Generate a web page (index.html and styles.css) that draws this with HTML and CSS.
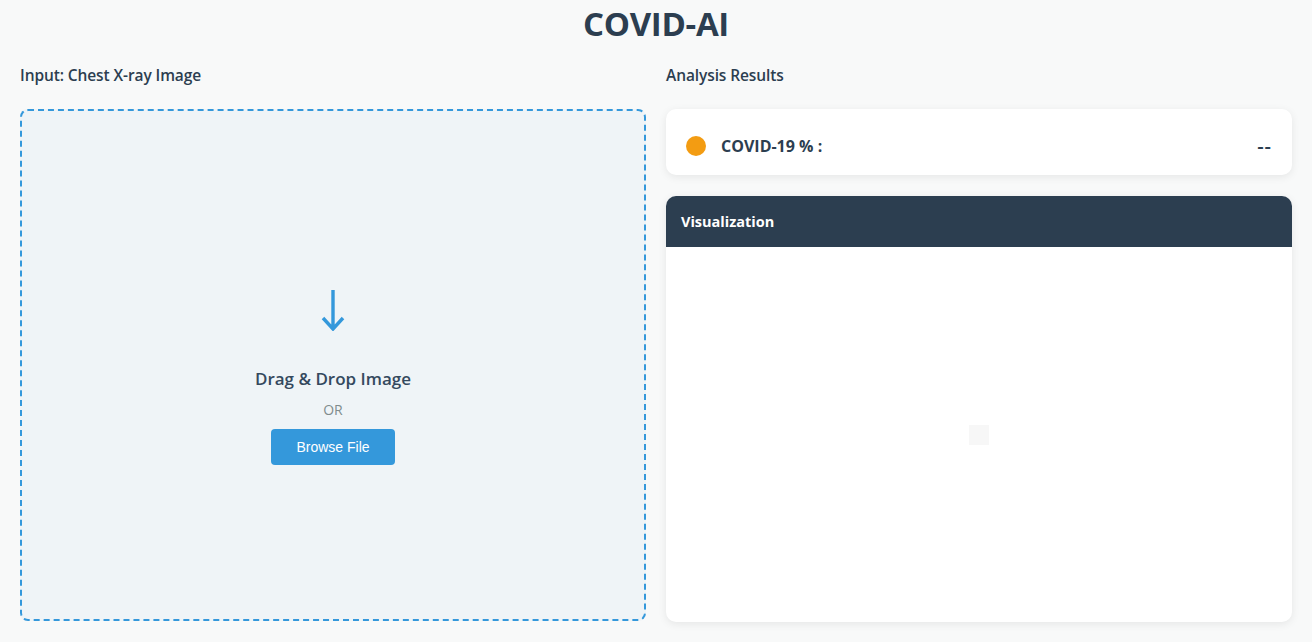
FILE: index.html
```html
<!DOCTYPE html>
<html>
<head>
<meta charset="utf-8">
<link rel="stylesheet" href="styles.css">
</head>
<body>
<h1 class="title">COVID-AI</h1>
<div class="main">
  <section class="col">
    <h3 class="label">Input: Chest X-ray Image</h3>
    <div class="dropzone">
      <svg class="arrow" width="24" height="42" viewBox="0 0 24 42">
        <path d="M12 1 V40 M2 29 L12 40 L22 29" fill="none" stroke="#3498db" stroke-width="3.4"/>
      </svg>
      <div class="drop-text">Drag &amp; Drop Image</div>
      <div class="or">OR</div>
      <button class="browse">Browse File</button>
    </div>
  </section>
  <section class="col">
    <h3 class="label">Analysis Results</h3>
    <div class="result-card">
      <span class="dot"></span>
      <span class="result-name">COVID-19 % :</span>
      <span class="result-value">--</span>
    </div>
    <div class="viz-card">
      <div class="viz-header">Visualization</div>
      <div class="viz-body"><div class="placeholder"></div></div>
    </div>
  </section>
</div>
</body>
</html>
```
FILE: styles.css
```css
html, body { margin: 0; padding: 0; }
body {
  background: #f8f9f9;
  font-family: "Open Sans", "Noto Sans", sans-serif;
  color: #2c3e50;
  width: 1312px;
  height: 642px;
  overflow: hidden;
}
.title {
  margin: 0;
  padding-top: 4px;
  height: 44px;
  line-height: 40px;
  text-align: center;
  font-size: 33px;
  font-weight: 700;
  color: #2c3e50;
  letter-spacing: -0.3px;
}
.main {
  display: grid;
  grid-template-columns: 626px 626px;
  gap: 20px;
  padding: 0 20px;
}
.col { display: flex; flex-direction: column; }
.label {
  margin: 0;
  height: 61px;
  line-height: 54px;
  font-size: 15.5px;
  font-weight: 600;
  color: #2c3e50;
  letter-spacing: -0.1px;
}
.dropzone {
  box-sizing: border-box;
  height: 512px;
  border: 2px dashed #3498db;
  border-radius: 8px;
  background: #eff4f7;
  display: flex;
  flex-direction: column;
  align-items: center;
  padding-top: 178px;
}
.arrow { display: block; }
.drop-text {
  margin-top: 36px;
  font-size: 17px;
  font-weight: 600;
  color: #34495e;
  line-height: 24px;
}
.or {
  margin-top: 9px;
  font-size: 14px;
  color: #7f8c8d;
  line-height: 19px;
}
.browse {
  margin-top: 10px;
  width: 124px;
  height: 36px;
  border: none;
  border-radius: 4px;
  background: #3498db;
  color: #fff;
  font-family: "Liberation Sans", Arial, sans-serif;
  font-size: 14px;
  padding: 0;
}
.result-card {
  box-sizing: border-box;
  height: 66px;
  background: #fff;
  border-radius: 10px;
  box-shadow: 0 2px 8px rgba(0,0,0,0.08);
  display: flex;
  align-items: center;
  padding: 7px 20px 0;
}
.dot {
  width: 20px; height: 20px;
  border-radius: 50%;
  background: #f39c12;
  margin-right: 15px;
}
.result-name {
  font-size: 16px;
  font-weight: 700;
  color: #2c3e50;
}
.result-value {
  margin-left: auto;
  font-size: 20px;
  font-weight: 600;
  letter-spacing: 1px;
  color: #2c3e50;
}
.viz-card {
  margin-top: 21px;
  height: 426px;
  background: #fff;
  border-radius: 10px;
  box-shadow: 0 2px 8px rgba(0,0,0,0.08);
  overflow: hidden;
  display: flex;
  flex-direction: column;
}
.viz-header {
  height: 51px;
  background: #2c3e50;
  color: #fff;
  font-size: 14.5px;
  font-weight: 700;
  line-height: 52px;
  padding-left: 15px;
}
.viz-body {
  flex: 1;
  display: flex;
  align-items: center;
  justify-content: center;
}
.placeholder {
  width: 20px; height: 20px;
  background: #f7f7f7;
}
```
